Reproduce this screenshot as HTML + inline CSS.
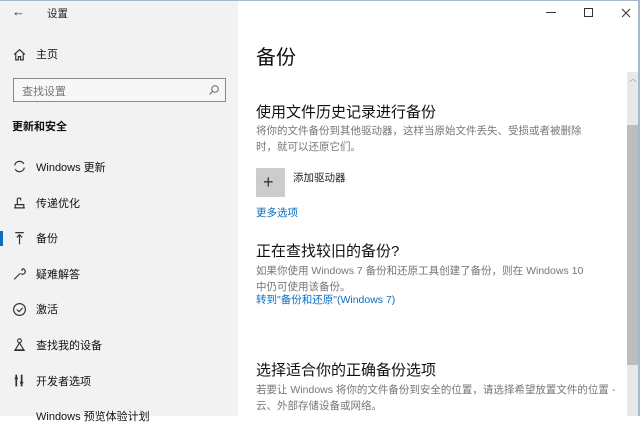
<!DOCTYPE html>
<html><head><meta charset="utf-8"><style>
*{margin:0;padding:0;box-sizing:border-box}
body{width:640px;height:416px;overflow:hidden;background:#fff;position:relative;font-family:"Liberation Sans","Noto Sans CJK SC",sans-serif;color:#000}
.a{position:absolute;white-space:nowrap}
#side{position:absolute;left:0;top:0;width:238px;height:416px;background:#f2f2f2}
.nav{font-size:11px;color:#111}
.ic{position:absolute;left:12px;width:15px;height:15px}
.g{color:#767676;font-size:10.5px;line-height:16px}
.l{color:#0a6fc2;font-size:10.5px}
</style></head><body>
<div id="side">
 <div class="a" style="left:12px;top:4px;font-size:13px;color:#333">←</div>
 <div class="a" style="left:47px;top:6px;font-size:10.5px;color:#222">设置</div>
 <svg class="ic" style="top:47px" viewBox="0 0 14 14"><path d="M2 7L7 2.5 12 7M3.5 6v6h2.5V9h2v3h2.5V6" fill="none" stroke="#333" stroke-width="1.1"/></svg>
 <div class="a nav" style="left:36px;top:46px">主页</div>
 <div class="a" style="left:13px;top:78px;width:213px;height:24px;border:1.5px solid #8a8a8a;background:#f7f7f7"></div>
 <div class="a" style="left:22px;top:83px;font-size:11px;color:#777">查找设置</div>
 <svg class="a" style="left:208px;top:84px" width="12" height="12" viewBox="0 0 12 12"><circle cx="7" cy="5" r="3.3" fill="none" stroke="#666"/><path d="M4.6 7.4L1.5 10.5" stroke="#666"/></svg>
 <div class="a" style="left:12px;top:118px;font-size:11px;font-weight:bold;color:#111">更新和安全</div>
 <svg class="ic" style="top:159px" viewBox="0 0 14 14"><path d="M2.5 6A4.6 4.6 0 0 1 11 4.5M11.5 8A4.6 4.6 0 0 1 3 9.5" fill="none" stroke="#333" stroke-width="1.1"/></svg>
 <div class="a nav" style="left:36px;top:159px">Windows 更新</div>
 <svg class="ic" style="top:195px" viewBox="0 0 14 14"><path d="M2 12h10M3 12V9h8v3M5 3v6M5 3h3v2" fill="none" stroke="#333" stroke-width="1.1"/></svg>
 <div class="a nav" style="left:36px;top:195px">传递优化</div>
 <div class="a" style="left:0;top:231px;width:3px;height:15px;background:#0a6fc2"></div>
 <svg class="ic" style="top:231px" viewBox="0 0 14 14"><path d="M3 1.5h8M7 3.5v9M4.5 6L7 3.5 9.5 6" fill="none" stroke="#333" stroke-width="1.1"/></svg>
 <div class="a nav" style="left:36px;top:230px">备份</div>
 <svg class="ic" style="top:266px" viewBox="0 0 14 14"><path d="M2 12.5L7.5 7M8 7a2.6 2.6 0 1 0 2-4.5L9 4.5" fill="none" stroke="#333" stroke-width="1.1"/></svg>
 <div class="a nav" style="left:36px;top:266px">疑难解答</div>
 <svg class="ic" style="top:302px" viewBox="0 0 14 14"><circle cx="7" cy="7" r="5.5" fill="none" stroke="#333" stroke-width="1.1"/><path d="M4.5 7l2 2 3.5-3.5" fill="none" stroke="#333" stroke-width="1.1"/></svg>
 <div class="a nav" style="left:36px;top:301px">激活</div>
 <svg class="ic" style="top:337px" viewBox="0 0 14 14"><circle cx="7" cy="3.5" r="1.8" fill="none" stroke="#333"/><path d="M7 5.5L3 12h8L7 5.5M2 12.5h10" fill="none" stroke="#333" stroke-width="1.1"/></svg>
 <div class="a nav" style="left:36px;top:337px">查找我的设备</div>
 <svg class="ic" style="top:373px" viewBox="0 0 14 14"><path d="M4 1.5v11M9 1.5v11M2.5 5h3M7.5 9h3" fill="none" stroke="#333" stroke-width="1.6"/></svg>
 <div class="a nav" style="left:36px;top:373px">开发者选项</div>
 <div class="a nav" style="left:36px;top:408px">Windows 预览体验计划</div>
</div>
<div class="a" style="left:546px;top:12px;width:10px;height:1px;background:#333"></div>
<div class="a" style="left:584px;top:8px;width:9px;height:9px;border:1px solid #333"></div>
<svg class="a" style="left:621px;top:8px" width="10" height="10" viewBox="0 0 10 10"><path d="M1 1L9 9M9 1L1 9" stroke="#333"/></svg>
<div class="a" style="left:627px;top:72px;width:11px;height:344px;background:#e8e8e8"></div>
<div class="a" style="left:627px;top:125px;width:11px;height:240px;background:#bdbdbd"></div>
<div class="a" style="left:629px;top:73px;font-size:8px;color:#999">︿</div>
<div class="a" style="left:638px;top:0;width:2px;height:416px;background:#a9b8c8"></div>
<div class="a" style="left:0;top:0;width:640px;height:1px;background:#a9b8c8"></div>
<div class="a" style="left:256px;top:41px;font-size:20px;color:#111">备份</div>
<div class="a" style="left:256px;top:101px;font-size:15px;color:#111">使用文件历史记录进行备份</div>
<div class="a g" style="left:256px;top:123px">将你的文件备份到其他驱动器，这样当原始文件丢失、受损或者被删除<br>时，就可以还原它们。</div>
<div class="a" style="left:256px;top:168px;width:29px;height:29px;background:#ccc"></div>
<div class="a" style="left:263px;top:172px;font-size:18px;color:#333">+</div>
<div class="a" style="left:293px;top:170px;font-size:10.5px;color:#222">添加驱动器</div>
<div class="a l" style="left:256px;top:205px">更多选项</div>
<div class="a" style="left:256px;top:240px;font-size:15px;color:#111">正在查找较旧的备份?</div>
<div class="a g" style="left:256px;top:263px">如果你使用 Windows 7 备份和还原工具创建了备份，则在 Windows 10<br>中仍可使用该备份。</div>
<div class="a l" style="left:256px;top:292px">转到"备份和还原"(Windows 7)</div>
<div class="a" style="left:256px;top:359px;font-size:15px;color:#111">选择适合你的正确备份选项</div>
<div class="a g" style="left:256px;top:382px">若要让 Windows 将你的文件备份到安全的位置，请选择希望放置文件的位置 -<br>云、外部存储设备或网络。</div>
</body></html>
